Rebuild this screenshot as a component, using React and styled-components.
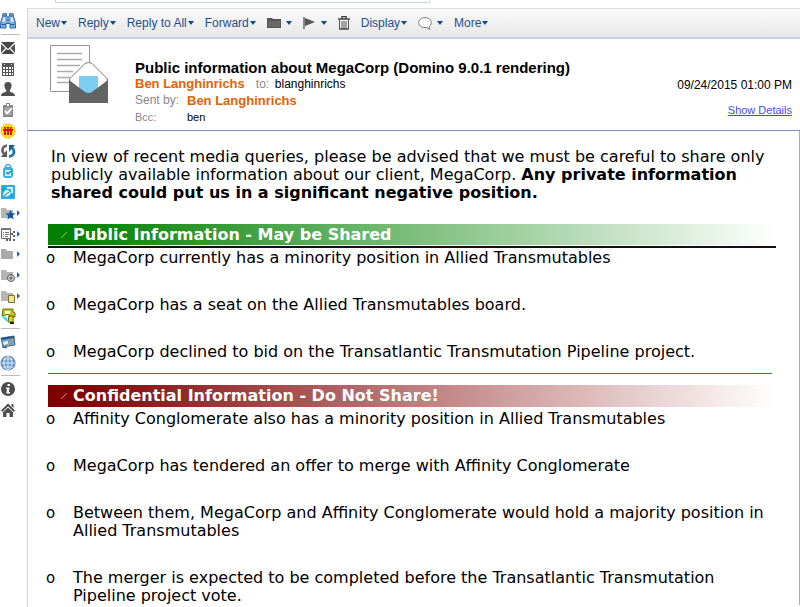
import React from 'react';
import styled, { createGlobalStyle } from 'styled-components';

const COLORS = {
  link: '#1d4f91',
  rule: '#7f8fbb',
  orange: '#e86100',
  gray: '#888888',
};

const GlobalStyle = createGlobalStyle`
  * { box-sizing: border-box; }
  html, body { margin: 0; height: 100%; overflow: hidden; background: #fff; }
  #root { height: 100%; }
  body { font-family: "Liberation Sans", Arial, sans-serif; font-size: 12px; color: #000; }
  button { font: inherit; border: 0; padding: 0; margin: 0; background: none; cursor: pointer; }
`;

/* ---------- icons ---------- */

const Svg = ({ children, w = 16, h = 16 }) => (
  <svg width={w} height={h} viewBox={`0 0 ${w} ${h}`} fill="none" aria-hidden="true">
    {children}
  </svg>
);

const Binoculars = () => (
  <Svg>
    <path d="M3 .7h3.500V3L7 4h2l.5-1V.7H13l.5 3L15 8l.5 3.500V15H10v-4.500H6V15H.5v-3.500L1 8l1.500-4.300z" fill="#79aee4" stroke="#2f66ac" />
    <path d="M3.500 4h1.800v5H2zM10.700 4h1.800L14 9h-3.300z" fill="#d3e8fb" />
    <path d="M1.500 11.500h4M10.500 11.500h4M6.500 7h3M3 3h3M10 3h3" stroke="#2457a0" />
  </Svg>
);

const Mail = () => (
  <Svg>
    <path d="M1 2h14L8 9z" fill="#444" />
    <path d="M1 4l4.600 4L1 13zM15 4l-4.600 4L15 13z" fill="#555" />
    <path d="M1.500 14l5-5L8 10.300 9.500 9l5 5z" fill="#444" />
  </Svg>
);

const Calendar = () => (
  <Svg>
    <path d="M2 2h12v13H2z" fill="#555" />
    <path d="M3 6h2v2H3zM6 6h2v2H6zM9 6h2v2H9zM12 6h1v2h-1zM3 9h2v2H3zM6 9h2v2H6zM9 9h2v2H9zM12 9h1v2h-1zM3 12h2v2H3zM6 12h2v2H6zM9 12h2v2H9zM12 12h1v2h-1z" fill="#fff" />
    <path d="M4 3h1v1H4zM11 3h1v1h-1z" fill="#ddd" />
  </Svg>
);

const Person = () => (
  <Svg>
    <path d="M8 1c2.500 0 3.800 1.600 3.600 4-.2 2-1 3-1.800 4v1.500c1.500 1 5 1 5.200 4.500H1c.2-3.500 3.700-3.500 5.200-4.500V9C5.400 8 4.600 7 4.400 5 4.200 2.600 5.500 1 8 1z" fill="#505050" />
  </Svg>
);

const Tasks = () => (
  <Svg>
    <path d="M3 3h3V1h4v2h3v12H3z" fill="#888" />
    <path d="M4.500 5.500h7v7.500h-7z" fill="#aaa" />
    <path d="M5 9l2.300 2.300L12 6" stroke="#fff" strokeWidth="1.800" />
    <path d="M7 2h2v2H7z" fill="#fff" />
  </Svg>
);

const Badge = () => (
  <Svg>
    <circle cx="8" cy="8" r="7" fill="#ffe600" stroke="#f0a800" strokeDasharray="2 1" />
    <path d="M3 6h10v2h-1v4H4V8H3z" fill="#e01010" />
    <path d="M4 4.500l2 1M12 4.500l-2 1M7 4l1 1.500L9 4" stroke="#e01010" strokeWidth="1.500" />
    <path d="M6.500 8v4M9.500 8v4" stroke="#ffe600" />
  </Svg>
);

const Sync = () => (
  <Svg>
    <path d="M7 2.500C2.500 3 1 7.500 4 11" stroke="#666" strokeWidth="2.600" />
    <path d="M7 7v7H1z" fill="#555" />
    <path d="M9 13.500c5-.5 6.500-5 3.300-8.500" stroke="#1f78ac" strokeWidth="2.800" />
    <path d="M9 9V2h6z" fill="#165f92" />
  </Svg>
);

const Tag = () => (
  <Svg>
    <path d="M5.500 6V3q2.500-3 5 0v3" stroke="#4aa5cd" strokeWidth="1.500" />
    <rect x="3" y="4" width="10" height="11" rx="3" fill="#35b1df" />
    <path d="M5 7h6v6H5z" fill="#d9f3ff" />
    <path d="M6 9l2 2 3-3" stroke="#1a89bd" strokeWidth="1.500" />
  </Svg>
);

const Pictures = () => (
  <Svg>
    <rect x="1" y="1" width="14" height="14" rx="1" fill="#2baee0" />
    <path d="M7 3h6v6h-2V5H7zM3 12c0-4 2-6 5-6l3 3c-1 3-4 4-8 3z" fill="#d8f3ff" />
    <path d="M4 12l5-4M3 6l2-3M10 13l3-2" stroke="#1383b5" />
  </Svg>
);

const folderPath = 'M1 3h5l1 2h6v8H1z';

const FolderStar = () => (
  <Svg>
    <path d={folderPath} fill="#b5b5b5" />
    <path d="M10.500 5l1.400 3.300 3.600.2-2.800 2.300 1 3.600-3.200-2-3.200 2 1-3.600L5.500 8.500l3.600-.2z" fill="#12579b" />
  </Svg>
);

const Views = () => (
  <Svg>
    <path d="M1.500 2.500h9v10h-9z" stroke="#666" />
    <path d="M1 2h10v2H1zM3 6h1v1H3zM5 6h4v1H5zM3 8h1v1H3zM5 8h4v1H5zM3 10h1v1H3zM5 10h3v1H5z" fill="#777" />
    <path d="M11 7h2v2h-2zM9 12h2v3H9zM13 5h2v2h-2zM13 9h2v2h-2zM13 13h2v2h-2zM6 13h2v2H6z" fill="#666" />
  </Svg>
);

const PlainFolder = () => (
  <Svg><path d={folderPath} fill="#aaa" /></Svg>
);

const FolderClock = () => (
  <Svg>
    <path d={folderPath} fill="#b5b5b5" />
    <circle cx="11" cy="11" r="3.500" fill="#ddd" stroke="#555" />
    <path d="M11 8.500V11h2M9 11h2v2" stroke="#555" />
  </Svg>
);

const FolderNote = () => (
  <Svg>
    <path d={folderPath} fill="#b5b5b5" />
    <path d="M8.500 7.500h6v7h-6z" fill="#f7e680" stroke="#77723d" />
  </Svg>
);

const Tools = () => (
  <Svg>
    <path d="M3 1h10v3l2 1v4H9V6L2 8z" fill="#c1c728" stroke="#65700a" />
    <path d="M5 3h5v3H5z" fill="#f8f8d0" />
    <path d="M9 8h4v6H8z" fill="#e5df00" stroke="#585d00" />
    <path d="M1 8l5 1 3 5-3-1-2-2z" fill="#38ddec" />
    <path d="M10 15h4" stroke="#222" strokeWidth="2" />
  </Svg>
);

const Editor = () => (
  <Svg>
    <path d="M1 4l13-2 1 9-12 2z" fill="#6aa7d9" stroke="#386d9c" />
    <path d="M1 4l13-2v2L2 6z" fill="#285983" />
    <path d="M3 8l5-1v3l-4 1z" fill="#e1f0fc" />
    <path d="M14 5l-6 7-2 2 1-3 6-7z" fill="#f1b14e" stroke="#7d6849" strokeWidth=".5" />
    <path d="M2 13l5 1" stroke="#345d86" />
  </Svg>
);

const Globe = () => (
  <Svg>
    <circle cx="8" cy="8" r="7" fill="#6e9bd0" stroke="#4471aa" />
    <path d="M1 8h14M3 4h10M3 12h10M8 1v14" stroke="#dce9f8" />
    <ellipse cx="8" cy="8" rx="4" ry="7" stroke="#dce9f8" />
  </Svg>
);

const Info = () => (
  <Svg>
    <circle cx="8" cy="8" r="7" fill="#4c4c4c" />
    <path d="M7.500 3h2.500v2H7.500zM6 6.500h3.500L8.800 11H10v1.500H6.300L7 8H6z" fill="#fff" />
  </Svg>
);

const Home = () => (
  <Svg>
    <path d="M8 1.500l7 7-1.200 1.200L8 4.200 2.200 9.700 1 8.500z" fill="#444" />
    <path d="M3 10l5-4.500 5 4.500v5h-3.500v-4h-3v4H3zM11.500 2h2v4l-2-2z" fill="#505050" />
  </Svg>
);

const DarkFolder = () => (
  <Svg w={14} h={12}>
    <path d="M0 1h5l1 1h8v9H0z" fill="#555" />
    <path d="M1 4h12v6H1z" fill="#686868" />
  </Svg>
);

const Flag = () => (
  <Svg w={13} h={12}>
    <path d="M1 0v12" stroke="#666" strokeWidth="1.500" />
    <path d="M2 1l10 4-10 4z" fill="#555" />
  </Svg>
);

const Trash = () => (
  <Svg w={12} h={14}>
    <path d="M0 3h12M4 2.500v-2h4v2" stroke="#444" strokeWidth="1.500" />
    <path d="M1.500 4v9h9V4M4 5v8M6 5v8M8 5v8" stroke="#555" />
    <path d="M1 13h10" stroke="#444" />
  </Svg>
);

const Chat = () => (
  <Svg w={14} h={13}>
    <path d="M7 .7C3 .7.700 3 .7 5.700S3 10.500 7 10.500h2l2.500 2-.3-2.800c1.300-.8 2-2.200 2-4C13.200 3 11 .7 7 .7z" fill="#fff" stroke="#777" />
  </Svg>
);

const Caret = () => (
  <Svg w={6} h={4}><path d="M0 0h6L3 4z" fill="#0b4a94" /></Svg>
);

const Expand = () => (
  <Svg w={3} h={6}><path d="M0 0v6l3-3z" fill="#2f5ea3" /></Svg>
);

const Letter = () => (
  <Svg w={59} h={59}>
    <path d="M.5.500h39v46H.5z" fill="#fff" stroke="#929292" />
    <path d="M7 8.500h25M7 14.500h25M7 20.500h23M7 26.500h16M7 32.500h13M7 37.500h12" stroke="#aaa" strokeWidth="1.500" />
    <path d="M19.500 34L35 18.500q3.500-2 7 0L57.500 34v23h-38z" fill="#fff" stroke="#777" />
    <path d="M29 31h19v13l-8 5h-4l-7-4z" fill="#7bcdf2" />
    <path d="M19 35l16 12q3.500 2 7 0l16-12v23H19z" fill="#636363" />
  </Svg>
);

/* ---------- sidebar ---------- */

const Shell = styled.div`
  display: flex;
  height: 100%;
`;

const Sidebar = styled.nav`
  flex: 0 0 27px;
  padding-top: 10px;
`;

const SideButton = styled.button`
  display: flex;
  align-items: center;
  gap: 1px;
  width: 21px;
  height: ${p => (p.$short ? 20 : 21)}px;
`;

const SideRule = styled.hr`
  width: 19px;
  height: 1px;
  margin: ${p => (p.$tight ? '2px 0 2px 1px' : '3px 0 2px 1px')};
  border: 0;
  background: #bbb;
`;

const SIDE_ITEMS = [
  { label: 'Search', icon: Binoculars },
  { rule: true },
  { label: 'Mail', icon: Mail },
  { label: 'Calendar', icon: Calendar },
  { label: 'Contacts', icon: Person, short: true },
  { label: 'To Do', icon: Tasks },
  { label: 'Feeds', icon: Badge },
  { label: 'Replication', icon: Sync, short: true },
  { label: 'Tags', icon: Tag, short: true },
  { label: 'Gallery', icon: Pictures },
  { label: 'Favorites', icon: FolderStar, expand: true },
  { label: 'Views', icon: Views, expand: true },
  { label: 'Folders', icon: PlainFolder, expand: true, short: true },
  { label: 'History', icon: FolderClock, expand: true },
  { label: 'Notes', icon: FolderNote, expand: true },
  { label: 'Tools', icon: Tools, short: true },
  { rule: true, tight: true },
  { label: 'Editor', icon: Editor },
  { label: 'Web', icon: Globe },
  { rule: true, tight: true },
  { label: 'Info', icon: Info },
  { label: 'Home', icon: Home },
];

const SideNav = () => (
  <Sidebar aria-label="Applications">
    {SIDE_ITEMS.map(({ label, icon: Icon, rule, tight, expand, short }, i) =>
      rule ? (
        <SideRule key={i} $tight={tight} />
      ) : (
        <SideButton key={i} type="button" aria-label={label} $short={short}>
          <Icon />
          {expand && <Expand />}
        </SideButton>
      )
    )}
  </Sidebar>
);

/* ---------- toolbar ---------- */

const Main = styled.main`
  display: flex;
  flex-direction: column;
  flex: 1;
  min-width: 0;
`;

const TabEdge = styled.div`
  flex: 0 0 3px;
  width: 375px;
  margin: 0 0 5px 28px;
  border: solid #ccd2dc;
  border-width: 0 1px 1px;
`;

const Panel = styled.div`
  flex: 1;
  min-height: 0;
  border-left: 1px solid #d3d7dd;
`;

const Toolbar = styled.div`
  display: flex;
  align-items: center;
  height: 31px;
  padding-left: 8px;
  border-top: 1px solid #ddd;
  border-bottom: 2px solid #c5d0e4;
  background: linear-gradient(#fafafa, #e7e7e7);
`;

const ToolButton = styled.button`
  display: flex;
  align-items: center;
  gap: ${p => (p.$icon ? 5 : 1)}px;
  margin-right: 11px;
  color: ${COLORS.link};
  line-height: 16px;
  white-space: nowrap;
`;

const TOOLS = [
  { text: 'New' },
  { text: 'Reply' },
  { text: 'Reply to All' },
  { text: 'Forward' },
  { label: 'Move to folder', icon: DarkFolder },
  { label: 'Follow up', icon: Flag },
  { label: 'Delete', icon: Trash, plain: true },
  { text: 'Display' },
  { label: 'Chat', icon: Chat },
  { text: 'More' },
];

const ActionBar = () => (
  <Toolbar role="toolbar">
    {TOOLS.map(({ text, label, icon: Icon, plain }) => (
      <ToolButton key={text || label} type="button" aria-label={label} $icon={!!Icon}>
        {Icon ? <Icon /> : text}
        {!plain && <Caret />}
      </ToolButton>
    ))}
  </Toolbar>
);

/* ---------- message header ---------- */

const Header = styled.header`
  display: flex;
  padding: 6px 8px 5px 22px;
  border-bottom: 1px solid ${COLORS.rule};
`;

const Fields = styled.div`
  flex: 1;
  padding: 14px 0 0 26px;
`;

const Subject = styled.h1`
  margin: 0;
  font-size: 15px;
  line-height: 17px;
`;

const Field = styled.div`
  display: flex;
  align-items: center;
  font-size: ${p => (p.$small ? 11 : 12)}px;
  line-height: ${p => (p.$tall ? 17 : 16)}px;
`;

const Label = styled.span`
  width: ${p => p.$width}px;
  color: ${COLORS.gray};
`;

const Sender = styled.span`
  margin-right: 11px;
  font-size: 13px;
  font-weight: bold;
  color: ${COLORS.orange};
`;

const Meta = styled.div`
  display: flex;
  flex-direction: column;
  align-items: flex-end;
  gap: 9px;
  padding-top: 32px;
  line-height: 16px;
`;

const DetailsLink = styled.a`
  font-size: 11px;
  color: #4646ee;
`;

const MessageHeader = () => (
  <Header>
    <Letter />
    <Fields>
      <Subject>Public information about MegaCorp (Domino 9.0.1 rendering)</Subject>
      <Field>
        <Sender>Ben Langhinrichs</Sender>
        <Label $width={19}>to:</Label>
        <span>blanghinrichs</span>
      </Field>
      <Field $tall>
        <Label $width={52}>Sent by:</Label>
        <Sender>Ben Langhinrichs</Sender>
      </Field>
      <Field $small>
        <Label $width={52}>Bcc:</Label>
        <span>ben</span>
      </Field>
    </Fields>
    <Meta>
      <time dateTime="2015-09-24T13:00">09/24/2015 01:00 PM</time>
      <DetailsLink href="#details">Show Details</DetailsLink>
    </Meta>
  </Header>
);

/* ---------- message body ---------- */

const Body = styled.article`
  padding: 17px 23px 0 20px;
  border-right: 1px solid #aaa;
  font-family: "DejaVu Sans", Verdana, sans-serif;
  font-size: 16px;
  line-height: 18px;
`;

const Intro = styled.p`
  margin: 0 0 22px;
  padding-left: 3px;
`;

const Banner = styled.h2`
  display: flex;
  align-items: center;
  height: ${p => p.$height}px;
  margin: 0 0 ${p => p.$gap}px;
  color: #fff;
  font-size: 16px;
  background: linear-gradient(to right, ${p => p.$color} 3%, #fff);
`;

const Mark = styled.span`
  display: flex;
  width: 25px;
  padding-left: 13px;
`;

const Rule = styled.hr`
  height: ${p => p.$height}px;
  margin: ${p => p.$margin};
  border: 0;
  background: ${p => p.$color};
`;

const List = styled.ul`
  margin: 0;
  padding: 0;
  list-style: none;
`;

const Item = styled.li`
  display: flex;
  padding: 1px 0 28px;

  &:last-child {
    padding-bottom: ${p => (p.$closed ? 12 : 0)}px;
  }

  &::before {
    content: "o";
    flex: 0 0 27px;
    margin-left: -2px;
    font-size: 15px;
  }
`;

const Section = ({ title, color, height, gap, items, divider, closed }) => (
  <section>
    <Banner $color={color} $height={height} $gap={gap}>
      <Mark>
        <Svg w={6} h={6}><path d="M0 6l6-6" stroke="#fff" strokeOpacity=".5" /></Svg>
      </Mark>
      {title}
    </Banner>
    {divider}
    <List>
      {items.map(text => (
        <Item key={text} $closed={closed}>{text}</Item>
      ))}
    </List>
  </section>
);

const PUBLIC_ITEMS = [
  'MegaCorp currently has a minority position in Allied Transmutables',
  'MegaCorp has a seat on the Allied Transmutables board.',
  'MegaCorp declined to bid on the Transatlantic Transmutation Pipeline project.',
];

const PRIVATE_ITEMS = [
  'Affinity Conglomerate also has a minority position in Allied Transmutables',
  'MegaCorp has tendered an offer to merge with Affinity Conglomerate',
  'Between them, MegaCorp and Affinity Conglomerate would hold a majority position in Allied Transmutables',
  'The merger is expected to be completed before the Transatlantic Transmutation Pipeline project vote.',
];

const App = () => (
  <>
    <GlobalStyle />
    <Shell>
      <SideNav />
      <Main>
        <TabEdge />
        <Panel>
          <ActionBar />
          <MessageHeader />
          <Body>
            <Intro>
              In view of recent media queries, please be advised that we must be careful to share only
              publicly available information about our client, MegaCorp.{' '}
              <b>Any private information shared could put us in a significant negative position.</b>
            </Intro>
            <Section
              title="Public Information - May be Shared"
              color="#008000"
              height={21}
              gap={1}
              items={PUBLIC_ITEMS}
              closed
              divider={<Rule $height={2} $margin="0" $color="#111" />}
            />
            <Rule $height={1} $margin="0 4px 11px 0" $color="#2e8b2e" />
            <Section
              title="Confidential Information - Do Not Share!"
              color="#800000"
              height={22}
              gap={2}
              items={PRIVATE_ITEMS}
            />
          </Body>
        </Panel>
      </Main>
    </Shell>
  </>
);

export default App;
